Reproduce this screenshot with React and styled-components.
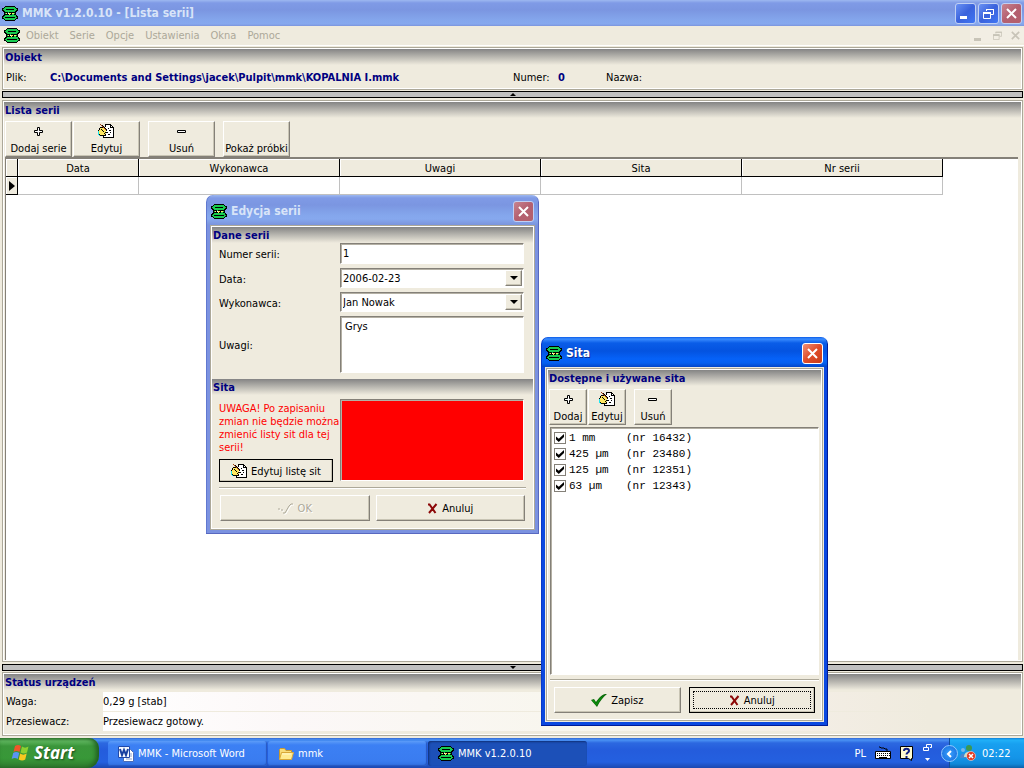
import React, { useState } from 'react';
import styled, { createGlobalStyle, css } from 'styled-components';

const GlobalStyle = createGlobalStyle`
  * {
    box-sizing: border-box;
  }

  body {
    margin: 0;
    background: #efebde;
  }

  body, button, input, select, textarea {
    font-family: "DejaVu Sans Condensed", "DejaVu Sans", sans-serif;
    font-size: 11px;
    line-height: 13px;
    color: #000;
  }

  svg {
    display: block;
    flex: none;
  }
`;

/* ---------- icons ---------- */

const palette = {
  k: '#000000',
  g: '#18cc50',
  w: '#ffffff',
  y: '#ffe860',
  c: '#20e8f0',
  r: '#a04010',
};

const sieve = [
  '...kkkkkkkkkk...',
  '..kggggggggggk..',
  'kkggggggggggggkk',
  'kgggkkkkkkkkgggk',
  'kkggggggggggggkk',
  '.kkggggggggggkk.',
  '..kkkkgkkkkkkk..',
  '..kgykwyykyygk..',
  '..kkkkkykkggkk..',
  '.kkgggggggggggk.',
  'kkggggggggggggkk',
  'kggkkkkkkkkkkggk',
  'kkggggggggggggkk',
  '..kggggggggggk..',
  '...kkkkkkkkkk...',
];

const edit = [
  '..r....kkkkkk...',
  '...rk..kwwwwkk..',
  '....rk.kwwwwkwk.',
  '..kkkrkwwwwwkkkk',
  '.kyyyyrkwwkwwwwk',
  '.kykyyyrkwwwwwwk',
  'kyyykyyykwwkkwwk',
  'cyyyykyywwwwwwwk',
  'cyyyyyykkkwwkwwk',
  'cyyyyykywwwwwwwk',
  'ckyyyyykwwkkwwwk',
  '.ckkkkkkwwwwwwwk',
  '.....kwwwwwwwwwk',
  '.....kkkkkkkkkkk',
];

function PixelIcon({ rows }) {
  return (
    <svg width="16" height={rows.length} shapeRendering="crispEdges" aria-hidden="true">
      {rows.map((row, y) =>
        row.split('').map((c, x) =>
          c === '.' ? null : <rect key={`${x}-${y}`} x={x} y={y} width="1" height="1" fill={palette[c]} />
        )
      )}
    </svg>
  );
}

const SieveIcon = () => <PixelIcon rows={sieve} />;
const EditIcon = () => <PixelIcon rows={edit} />;

const PlusIcon = () => (
  <svg width="9" height="9" aria-hidden="true">
    <path d="M3.500 .5h2v3h3v2h-3v3h-2v-3h-3v-2h3z" fill="#fff" stroke="#000" />
  </svg>
);

const MinusIcon = () => (
  <svg width="9" height="3" aria-hidden="true">
    <path d="M.5 .5h8v2h-8z" fill="#fff" stroke="#000" />
  </svg>
);

const CrossIcon = () => (
  <svg width="11" height="11" aria-hidden="true">
    <path d="M1 1.500h1.500L8.500 10M9.500 1L2 10" fill="none" stroke="#8c0808" strokeWidth="2" />
  </svg>
);

const CheckIcon = () => (
  <svg width="16" height="13" aria-hidden="true">
    <path d="M0 6l3-1 2 3c2-3 5-7 9-8h2c-4 3-7 7-10 13z" fill="#0a6a0a" />
    <path d="M1 6.500l2-.5 2 4c2-4 5-7 8-8.500-3 3-5 6-7.500 10z" fill="#0d940d" />
  </svg>
);

const DisabledCheckIcon = () => (
  <svg width="16" height="13" aria-hidden="true">
    <path d="M1 8h2M4 9h2M6 12h2l4-7 2-2h2" fill="none" stroke="#fff" />
    <path d="M0 7h2M3 8h2M5 11h2l4-7 2-2h2" fill="none" stroke="#aca899" />
  </svg>
);

const CloseGlyph = ({ size = 11 }) => (
  <svg width={size} height={size} viewBox="0 0 11 11" aria-hidden="true">
    <path d="M1 1l9 9M10 1l-9 9" stroke="currentColor" strokeWidth="2" />
  </svg>
);

const MinimizeGlyph = () => (
  <svg width="11" height="11" aria-hidden="true">
    <path d="M0 8h7v3H0z" fill="currentColor" />
  </svg>
);

const RestoreGlyph = ({ size = 11 }) => (
  <svg width={size} height={size} viewBox="0 0 11 11" aria-hidden="true">
    <path d="M3.500 3V1.500h7v5H8" fill="none" stroke="currentColor" />
    <path d="M3 1h8v1H3zM0 4h8v2H0z" fill="currentColor" />
    <path d="M.5 4.500h7v6h-7z" fill="none" stroke="currentColor" />
  </svg>
);

const FlagIcon = () => (
  <svg width="18" height="17" aria-hidden="true">
    <path d="M4 2c2-1.500 4-1.500 6 0L8.500 8c-2-1.500-4-1.500-6 0z" fill="#f0562a" />
    <path d="M11 2.500c2 1.500 4 1.500 6.500 0L16 8.500c-2 1.300-4 1.300-6.500 0z" fill="#8cd030" />
    <path d="M2.200 9c2-1.500 4-1.500 6 0L6.700 15c-2-1.500-4-1.500-6 0z" fill="#5a94f4" />
    <path d="M9.200 9.500c2 1.500 4 1.500 6.500 0L14.200 15.500c-2 1.300-4 1.300-6.500 0z" fill="#f8c820" />
  </svg>
);

const WordIcon = () => (
  <svg width="16" height="16" aria-hidden="true">
    <path d="M5.500 3.500h7l3 3v9h-10z" fill="#fff" stroke="#4a6cb8" />
    <path d="M12 8h2M12 10h2M8 13h6" stroke="#88a0d0" />
    <path d="M.5 .5h11v11H.5z" fill="#f4f8ff" stroke="#2048a8" />
    <path d="M2 3l2 6 2-5 2 5 2-6" fill="none" stroke="#1840a0" strokeWidth="2" />
  </svg>
);

const FolderIcon = () => (
  <svg width="16" height="14" aria-hidden="true">
    <path d="M1.500 12V2.500l1-1h4l1.500 2h5.500V6" fill="#f8dc78" stroke="#c89830" />
    <path d="M1.500 12.500l2-7h12l-2 7z" fill="#ffeb90" stroke="#d8a838" />
    <path d="M4 7h9" stroke="#fff8d0" />
  </svg>
);

const KeyboardIcon = () => (
  <svg width="16" height="14" aria-hidden="true">
    <path d="M4 1h1l1 1h3l1 1h2v2" fill="none" stroke="#000" />
    <path d="M.5 5.500h15v7H.5z" fill="#fff" stroke="#000" />
    <path d="M2 7.500h13M2 9.500h13" stroke="#000" strokeDasharray="1 1" />
    <path d="M4 11.500h8" stroke="#000" />
  </svg>
);

const HelpIcon = () => (
  <svg width="14" height="15" aria-hidden="true">
    <path d="M.5 .5h12v12h-1v2l-3-2h-8z" fill="#fffbd0" stroke="#000" />
    <path d="M4 5c0-3 5-3 5 0 0 1.500-2.500 1.500-2.500 3.500M6.500 10v2" fill="none" stroke="#102080" strokeWidth="2" />
  </svg>
);

const LangBarIcon = () => (
  <svg width="10" height="18" aria-hidden="true">
    <path d="M3.500 3V.5h5v3H7M.5 3.500h5v3h-5z" fill="none" stroke="#fff" />
    <path d="M2 14h5l-2.500 3z" fill="#fff" />
  </svg>
);

const MessengerIcon = () => (
  <svg width="17" height="16" aria-hidden="true">
    <circle cx="4" cy="5" r="2" fill="#78b8e8" />
    <path d="M1 13c0-6 6-6 6 0z" fill="#4888d0" />
    <circle cx="10" cy="3" r="3" fill="#3c9850" />
    <path d="M5 12c0-7 10-7 10 0z" fill="#c8e0c8" />
    <circle cx="12" cy="11" r="4.500" fill="#e03820" stroke="#fff" strokeWidth=".5" />
    <path d="M10 9l4 4M14 9l-4 4" stroke="#fff" strokeWidth="1.500" />
  </svg>
);

const RowMarker = () => (
  <svg width="6" height="10" aria-hidden="true">
    <path d="M0 0l6 5-6 5z" />
  </svg>
);

/* ---------- window chrome ---------- */

const Desktop = styled.div`
  position: relative;
  display: flex;
  flex-direction: column;
  min-height: 100vh;
  background: #efebde;
  overflow: hidden;
`;

const TitleText = styled.h1`
  flex: 1;
  margin: 0;
  font: bold 12px/18px "DejaVu Sans Condensed", sans-serif;
  color: ${props => (props.$active ? '#fff' : '#d8e4f8')};
  text-shadow: ${props => (props.$active ? '1px 1px 0 #0c2c90' : 'none')};
  white-space: nowrap;
`;

const inactiveTitle = 'linear-gradient(#9db8f0 0, #7f9ae6 3px, #7b96e1 10px, #84a6ec 20px, #86a8ee 24px, #7b94dc 100%)';
const activeTitle = 'linear-gradient(#0b5be8 0, #3a8cff 2px, #0a5de8 6px, #0453e0 14px, #0662f8 22px, #0560f0 26px, #0346c8 100%)';

const MainTitleBar = styled.header`
  display: flex;
  align-items: center;
  gap: 4px;
  height: 26px;
  padding: 0 2px;
  background: ${inactiveTitle};
`;

const WindowButtons = styled.div`
  display: flex;
  gap: 2px;
`;

const CaptionButton = styled.button`
  display: flex;
  align-items: center;
  justify-content: center;
  width: 21px;
  height: 21px;
  padding: 0;
  border: 1px solid ${props => (props.$active ? '#fff' : '#c0d0f4')};
  border-radius: 3px;
  color: #fff;
  background: linear-gradient(135deg, #6a92f4, #3a62dc 50%, #3f76f4);
  ${props => props.$close && css`
    background: ${props.$active
      ? 'linear-gradient(135deg, #f09078, #e04c28 50%, #c83c18)'
      : 'linear-gradient(135deg, #c88490, #b46070 50%, #b4606c)'};
  `}
`;

const MenuBar = styled.nav`
  display: flex;
  align-items: center;
  height: 19px;
  padding-left: 4px;
`;

const MenuItem = styled.button`
  padding: 0 5px 0 6px;
  border: none;
  background: none;
  color: #aca899;
`;

const MenuSpacer = styled.div`
  flex: 1;
`;

const MdiButton = styled.button`
  display: flex;
  align-items: center;
  justify-content: center;
  width: 18px;
  height: 15px;
  padding: 0;
  border: none;
  background: #f2eee4;
  color: #c8c4b8;
`;

const Workspace = styled.main`
  flex: 1;
  display: flex;
  flex-direction: column;
  padding: 1px 1px 2px 2px;
  border-top: 1px solid #fff;
`;

const Panel = styled.section`
  flex: ${props => (props.$grow ? '1' : 'none')};
  display: flex;
  flex-direction: column;
  padding: 1px;
  border: 1px solid #aca899;
  box-shadow: inset 0 0 0 1px #fff;
  background: #efebde;
`;

const PanelHeading = styled.h2`
  height: 16px;
  margin: 0;
  padding: 0 1px;
  font-size: 11px;
  line-height: 18px;
  color: #000080;
  background: linear-gradient(#848484, #efebde);
`;

const Splitter = styled.div`
  display: flex;
  justify-content: center;
  align-items: center;
  height: 7px;
  margin: ${props => (props.$up ? '1px 0 2px' : '2px 0 1px')};
  border: 1px solid #000;
  background: #c0c0c0;
`;

const SplitterArrow = ({ up }) => (
  <svg width="6" height="3" aria-hidden="true">
    <path d={up ? 'M0 3h6L3 0z' : 'M0 0h6L3 3z'} />
  </svg>
);

const ObjectInfo = styled.dl`
  display: grid;
  grid-template-columns: 44px minmax(0, 463px) 45px 48px 1fr;
  align-items: center;
  height: 23px;
  margin: 0;
  padding: 2px 0 0 2px;

  dd {
    margin: 0;
    font-weight: bold;
    color: #000080;
  }
`;

/* ---------- buttons ---------- */

const raised = css`
  border: 1px solid;
  border-color: #fff #848078 #848078 #fff;
  box-shadow: inset -1px -1px 0 #c8c4b4;
  background: #efebde;
`;

const Toolbar = styled.div`
  display: flex;
  gap: 1px;
  padding: 3px 1px 0;
`;

const ToolGap = styled.div`
  width: 6px;
`;

const ToolButton = styled.button`
  ${raised}
  display: grid;
  grid-template-rows: 18px 16px;
  align-items: center;
  justify-content: center;
  justify-items: center;
  width: ${props => props.$width}px;
  height: 36px;
  padding: 0;
  white-space: nowrap;
`;

const PushButton = styled.button`
  ${raised}
  display: flex;
  align-items: center;
  justify-content: center;
  gap: 4px;
  height: 26px;
  padding: 1px 4px 0;
  outline: ${props => (props.$default ? '1px solid #000' : 'none')};
  outline-offset: -1px;
  position: relative;
  white-space: nowrap;

  &:disabled {
    color: #aca899;
    text-shadow: 1px 1px 0 #fff;
  }

  ${props => props.$focused && css`
    &::after {
      content: '';
      position: absolute;
      inset: 3px;
      border: 1px dotted #000;
    }
  `}
`;

/* ---------- series table ---------- */

const GridBox = styled.div`
  flex: 1;
  margin: 0 3px 0 1px;
  border: solid #848078;
  border-width: 2px 0 0 1px;
  background: #fff;
`;

const Table = styled.table`
  table-layout: fixed;
  width: 937px;
  border-collapse: separate;
  border-spacing: 0;

  th, td {
    height: 18px;
    padding: 0;
    border-right: 1px solid #c0c0c0;
    border-bottom: 1px solid #c0c0c0;
    font-weight: normal;
  }

  th {
    border-color: #000;
    background: #efebde;
    box-shadow: inset 1px 1px 0 #fff;
  }

  thead th {
    padding-top: 2px;
  }

  tbody th {
    padding-left: 3px;
  }
`;

const seriesColumns = ['Data', 'Wykonawca', 'Uwagi', 'Sita', 'Nr serii'];

/* ---------- device status ---------- */

const StatusList = styled.dl`
  display: grid;
  grid-template-columns: 97px 1fr;
  grid-auto-rows: 19px;
  row-gap: 1px;
  align-items: center;
  margin: 0;
  padding: 2px 0 3px 2px;

  dd {
    margin: 0;
    line-height: 19px;
    background: linear-gradient(90deg, #fff 0, #fcf8f8 20%, #f8f6ee 50%, #f4eee6 75%, #efebde 90%);
  }
`;

/* ---------- dialogs ---------- */

const DialogFrame = styled.div`
  position: absolute;
  left: ${props => props.$x}px;
  top: ${props => props.$y}px;
  width: ${props => props.$width}px;
  height: ${props => props.$height}px;
  display: flex;
  flex-direction: column;
  padding: 0 4px 4px;
  border-radius: 7px 7px 0 0;
  background: ${props => (props.$active ? activeTitle : inactiveTitle)} 0 0 / 100% 30px no-repeat,
    ${props => (props.$active ? '#0a48e0' : '#7b92e0')};
  box-shadow: inset -1px -1px 0 ${props => (props.$active ? '#001c98' : '#5868c0')},
    inset 1px 0 0 ${props => (props.$active ? '#0838c8' : '#6078d0')};
`;

const DialogTitleBar = styled.div`
  display: flex;
  align-items: center;
  gap: 4px;
  flex: none;
  height: 30px;
  padding: 2px 1px 0;
`;

const DialogBody = styled.div`
  flex: 1;
  display: flex;
  flex-direction: column;
  padding: ${props => props.$inset}px;
  background: #efebde;
`;

const FieldGrid = styled.div`
  display: grid;
  grid-template-columns: 121px 184px;
  grid-template-rows: 21px 20px 20px 57px;
  row-gap: 4px;
  align-items: center;
  padding: 0 7px 6px;

  label {
    padding-top: 2px;
  }
`;

const sunken = css`
  border: 1px solid;
  border-color: #848078 #fff #fff #848078;
  box-shadow: inset 1px 1px 0 #b4b0a4;
  background: #fff;
`;

const TextInput = styled.input`
  ${sunken}
  width: 100%;
  height: 21px;
  padding: 0 2px;
`;

const TextArea = styled.textarea`
  ${sunken}
  display: block;
  width: 100%;
  height: 57px;
  padding: 3px 4px;
  resize: none;
`;

const SelectBox = styled.div`
  ${sunken}
  display: grid;
  grid-template-columns: 1fr 17px;
  height: 20px;
  padding: 1px;
`;

const Select = styled.select`
  grid-area: 1 / 1 / 2 / 3;
  appearance: none;
  border: none;
  padding: 0 1px;
  background: transparent;
  outline: none;
`;

const SelectArrow = styled.span`
  ${raised}
  grid-area: 1 / 2;
  display: flex;
  align-items: center;
  justify-content: center;
  pointer-events: none;

  &::after {
    content: '';
    border: 4px solid transparent;
    border-top-color: #000;
    border-bottom-width: 0;
  }
`;

const SieveSection = styled.div`
  display: grid;
  grid-template-columns: 121px 184px;
  padding: 4px 7px 0;
`;

const Warning = styled.p`
  margin: 0;
  padding: 3px 0 5px;
  color: #f00;
  white-space: nowrap;
`;

const EditListButton = styled(PushButton)`
  width: 114px;
  height: 23px;
`;

const SieveArea = styled.div`
  ${sunken}
  height: 82px;
  background: #f00;
`;

const Divider = styled.hr`
  width: calc(100% - ${props => props.$side * 2}px);
  height: 2px;
  margin: ${props => props.$top}px ${props => props.$side}px 6px;
  border: none;
  border-top: 1px solid #aca899;
  background: #fff;
`;

const ButtonRow = styled.div`
  display: grid;
  grid-template-columns: 1fr 1fr;
  gap: ${props => props.$gap}px;
  padding: 0 ${props => props.$side}px 6px;
`;

const CheckList = styled.ul`
  ${sunken}
  flex: 1;
  margin: 2px 2px 0;
  padding: 2px 3px;
  list-style: none;
`;

const CheckRow = styled.label`
  display: grid;
  grid-template-columns: 15px 57px 1fr;
  align-items: center;
  height: 16px;
  font: 11px/16px "Liberation Mono", monospace;
`;

const CheckBox = styled.input`
  appearance: none;
  display: grid;
  place-items: center;
  width: 12px;
  height: 12px;
  margin: 0;
  border: 1px solid #848078;
  background: #fff;

  &:checked::after {
    content: '';
    width: 8px;
    height: 8px;
    background: #000;
    clip-path: polygon(0 30%, 35% 60%, 100% 0, 100% 38%, 35% 100%, 0 70%);
  }
`;

/* ---------- taskbar ---------- */

const TaskBar = styled.footer`
  display: flex;
  align-items: stretch;
  height: 30px;
  background: linear-gradient(#3168d5 0, #4a92f4 2px, #2c68e0 5px, #245cdc 12px, #2460e0 24px, #1c48b0 100%);
  color: #fff;
`;

const StartButton = styled.button`
  display: flex;
  align-items: center;
  gap: 5px;
  width: 99px;
  padding: 0 0 1px 11px;
  border: none;
  border-radius: 0 10px 12px 0;
  background: linear-gradient(#3c8c3c 0, #60b860 3px, #3a963a 8px, #389838 20px, #2f7c2f 100%);
  box-shadow: inset -3px 0 5px #205c20;
  color: #fff;
  font: italic bold 17px/24px "Open Sans", sans-serif;
  text-shadow: 1px 1px 2px #1c4c1c;
`;

const Tasks = styled.div`
  flex: 1;
  display: flex;
  gap: 1px;
  padding: 3px 0 2px 9px;
`;

const TaskButton = styled.button`
  display: flex;
  align-items: center;
  gap: 4px;
  width: 159px;
  padding: 0 10px;
  border: none;
  border-radius: 3px;
  color: #fff;
  white-space: nowrap;
  background: ${props => (props.$pressed ? '#1c50b8' : 'linear-gradient(#5c9cf8, #3c80f4 4px, #3a7cf0 80%, #3070e0)')};
  box-shadow: ${props => (props.$pressed ? 'inset 1px 1px 2px #103078' : 'inset -1px -1px 1px #2858c0')};
`;

const LanguageBar = styled.div`
  display: flex;
  align-items: center;
  gap: 9px;
  padding-right: 16px;
`;

const Tray = styled.div`
  position: relative;
  display: flex;
  align-items: center;
  gap: 6px;
  width: 75px;
  padding-left: 10px;
  background: linear-gradient(#1080d8 0, #20b0f8 2px, #18a0f0 6px, #1494e8 20px, #1088d8 26px, #0c60a8 100%);
  box-shadow: inset 1px 0 0 #104c98;
`;

const TrayToggle = styled.button`
  position: absolute;
  left: -8px;
  top: 7px;
  display: flex;
  align-items: center;
  justify-content: center;
  width: 17px;
  height: 17px;
  padding: 0;
  border: 1px solid #90c8ff;
  border-radius: 50%;
  background: radial-gradient(#38a0ff, #1468d8);
`;

const initialSieves = [
  { size: '1 mm', nr: '16432' },
  { size: '425 µm', nr: '23480' },
  { size: '125 µm', nr: '12351' },
  { size: '63 µm', nr: '12343' },
];

function SeriesDialog() {
  return (
    <DialogFrame $x={206} $y={195} $width={333} $height={339} role="dialog" aria-label="Edycja serii">
      <DialogTitleBar>
        <SieveIcon />
        <TitleText as="h2">Edycja serii</TitleText>
        <CaptionButton $close aria-label="Zamknij"><CloseGlyph /></CaptionButton>
      </DialogTitleBar>
      <DialogBody $inset={0}>
        <Panel $grow>
          <PanelHeading as="h3">Dane serii</PanelHeading>
          <FieldGrid>
            <label htmlFor="numer">Numer serii:</label>
            <TextInput id="numer" defaultValue="1" />
            <label htmlFor="data">Data:</label>
            <SelectBox>
              <Select id="data"><option>2006-02-23</option></Select>
              <SelectArrow />
            </SelectBox>
            <label htmlFor="wykonawca">Wykonawca:</label>
            <SelectBox>
              <Select id="wykonawca"><option>Jan Nowak</option></Select>
              <SelectArrow />
            </SelectBox>
            <label htmlFor="uwagi">Uwagi:</label>
            <TextArea id="uwagi" defaultValue="Grys" />
          </FieldGrid>
          <PanelHeading as="h3">Sita</PanelHeading>
          <SieveSection>
            <div>
              <Warning>
                UWAGA! Po zapisaniu<br />
                zmian nie będzie można<br />
                zmienić listy sit dla tej<br />
                serii!
              </Warning>
              <EditListButton $default><EditIcon />Edytuj listę sit</EditListButton>
            </div>
            <SieveArea />
          </SieveSection>
          <Divider $side={7} $top={5} />
          <ButtonRow $gap={6} $side={8}>
            <PushButton disabled><DisabledCheckIcon />OK</PushButton>
            <PushButton><CrossIcon />Anuluj</PushButton>
          </ButtonRow>
        </Panel>
      </DialogBody>
    </DialogFrame>
  );
}

function SievesDialog() {
  const [checked, setChecked] = useState(initialSieves.map(() => true));

  const toggle = (index) => {
    setChecked(checked.map((value, i) => (i === index ? !value : value)));
  };

  return (
    <DialogFrame $active $x={541} $y={337} $width={287} $height={389} role="dialog" aria-label="Sita">
      <DialogTitleBar>
        <SieveIcon />
        <TitleText as="h2" $active>Sita</TitleText>
        <CaptionButton $close $active aria-label="Zamknij"><CloseGlyph /></CaptionButton>
      </DialogTitleBar>
      <DialogBody $inset={1}>
        <Panel $grow>
          <PanelHeading as="h3">Dostępne i używane sita</PanelHeading>
          <Toolbar>
            <ToolButton $width={38}><PlusIcon />Dodaj</ToolButton>
            <ToolButton $width={38}><EditIcon />Edytuj</ToolButton>
            <ToolGap />
            <ToolButton $width={38}><MinusIcon />Usuń</ToolButton>
          </Toolbar>
          <CheckList>
            {initialSieves.map((sito, i) => (
              <li key={sito.nr}>
                <CheckRow>
                  <CheckBox type="checkbox" checked={checked[i]} onChange={() => toggle(i)} />
                  <span>{sito.size}</span>
                  <span>(nr {sito.nr})</span>
                </CheckRow>
              </li>
            ))}
          </CheckList>
          <Divider $side={2} $top={4} />
          <ButtonRow $gap={8} $side={6}>
            <PushButton><CheckIcon />Zapisz</PushButton>
            <PushButton $default $focused><CrossIcon />Anuluj</PushButton>
          </ButtonRow>
        </Panel>
      </DialogBody>
    </DialogFrame>
  );
}

function App() {
  return (
    <>
      <GlobalStyle />
      <Desktop>
        <MainTitleBar>
          <SieveIcon />
          <TitleText>MMK v1.2.0.10 - [Lista serii]</TitleText>
          <WindowButtons>
            <CaptionButton aria-label="Minimalizuj"><MinimizeGlyph /></CaptionButton>
            <CaptionButton aria-label="Przywróć"><RestoreGlyph /></CaptionButton>
            <CaptionButton $close aria-label="Zamknij"><CloseGlyph /></CaptionButton>
          </WindowButtons>
        </MainTitleBar>
        <MenuBar>
          <SieveIcon />
          {['Obiekt', 'Serie', 'Opcje', 'Ustawienia', 'Okna', 'Pomoc'].map(item => (
            <MenuItem key={item}>{item}</MenuItem>
          ))}
          <MenuSpacer />
          <MdiButton aria-label="Minimalizuj okno"><MinimizeGlyph /></MdiButton>
          <MdiButton aria-label="Przywróć okno"><RestoreGlyph size={9} /></MdiButton>
          <MdiButton aria-label="Zamknij okno"><CloseGlyph size={9} /></MdiButton>
        </MenuBar>

        <Workspace>
          <Panel>
            <PanelHeading>Obiekt</PanelHeading>
            <ObjectInfo>
              <dt>Plik:</dt>
              <dd>C:\Documents and Settings\jacek\Pulpit\mmk\KOPALNIA I.mmk</dd>
              <dt>Numer:</dt>
              <dd>0</dd>
              <dt>Nazwa:</dt>
            </ObjectInfo>
          </Panel>
          <Splitter $up><SplitterArrow up /></Splitter>
          <Panel $grow>
            <PanelHeading>Lista serii</PanelHeading>
            <Toolbar>
              <ToolButton $width={67}><PlusIcon />Dodaj serie</ToolButton>
              <ToolButton $width={67}><EditIcon />Edytuj</ToolButton>
              <ToolGap />
              <ToolButton $width={67}><MinusIcon />Usuń</ToolButton>
              <ToolGap />
              <ToolButton $width={67}><span />Pokaż próbki</ToolButton>
            </Toolbar>
            <GridBox>
              <Table>
                <colgroup>
                  <col width="12" />
                  <col width="121" />
                  <col width="201" />
                  <col width="201" />
                  <col width="201" />
                  <col width="201" />
                </colgroup>
                <thead>
                  <tr>
                    <th />
                    {seriesColumns.map(name => <th key={name} scope="col">{name}</th>)}
                  </tr>
                </thead>
                <tbody>
                  <tr>
                    <th scope="row"><RowMarker /></th>
                    {seriesColumns.map(name => <td key={name} />)}
                  </tr>
                </tbody>
              </Table>
            </GridBox>
          </Panel>
          <Splitter><SplitterArrow /></Splitter>
          <Panel>
            <PanelHeading>Status urządzeń</PanelHeading>
            <StatusList>
              <dt>Waga:</dt>
              <dd>0,29 g [stab]</dd>
              <dt>Przesiewacz:</dt>
              <dd>Przesiewacz gotowy.</dd>
            </StatusList>
          </Panel>
        </Workspace>

        <TaskBar>
          <StartButton><FlagIcon />Start</StartButton>
          <Tasks>
            <TaskButton><WordIcon />MMK - Microsoft Word</TaskButton>
            <TaskButton><FolderIcon />mmk</TaskButton>
            <TaskButton $pressed><SieveIcon />MMK v1.2.0.10</TaskButton>
          </Tasks>
          <LanguageBar>
            <span>PL</span>
            <KeyboardIcon />
            <HelpIcon />
            <LangBarIcon />
          </LanguageBar>
          <Tray>
            <TrayToggle aria-label="Pokaż ukryte ikony">
              <svg width="7" height="8" aria-hidden="true">
                <path d="M5 1L2 4l3 3" fill="none" stroke="#fff" strokeWidth="2" />
              </svg>
            </TrayToggle>
            <MessengerIcon />
            <time>02:22</time>
          </Tray>
        </TaskBar>

        <SeriesDialog />
        <SievesDialog />
      </Desktop>
    </>
  );
}

export default App;
